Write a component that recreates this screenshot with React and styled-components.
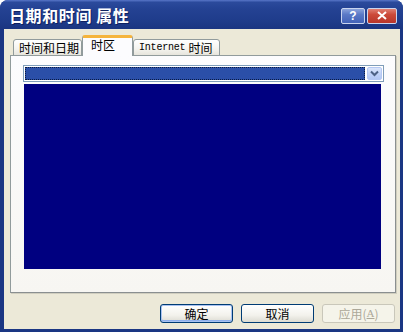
import React from "react";
import styled, { createGlobalStyle } from "styled-components";

const GlobalStyle = createGlobalStyle`
  html, body { margin: 0; padding: 0; background: #ffffff; }
  body { font-family: "Noto Sans CJK SC", "Liberation Sans", sans-serif; }
`;

const Window = styled.div`
  width: 403px;
  height: 332px;
  display: flex;
  flex-direction: column;
  background: #1a3683;
  border-radius: 8px 8px 0 0;
  overflow: hidden;
`;

const TitleBar = styled.div`
  height: 29px;
  flex: none;
  display: flex;
  align-items: center;
  padding: 0 6px 0 9px;
  background: linear-gradient(180deg, #5876c8 0%, #2b4a9c 8%, #244293 30%, #1f3c8b 70%, #1a3581 100%);
`;

const Title = styled.div`
  flex: 1;
  color: #ffffff;
  font-size: 16px;
  font-weight: 700;
  letter-spacing: 0.6px;
  text-shadow: 1px 1px 0 #0f2160;
  line-height: 1;
  margin-top: 1px;
`;

const CaptionButton = styled.div`
  width: ${(p) => p.$w}px;
  height: 16px;
  margin-left: 2px;
  margin-top: 2px;
  border-radius: 2px;
  border: 1px solid #c9d4ee;
  box-sizing: border-box;
  display: flex;
  align-items: center;
  justify-content: center;
  color: #ffffff;
  font-family: "Liberation Sans", sans-serif;
  font-weight: 700;
  font-size: 12px;
  background: ${(p) =>
    p.$close
      ? "linear-gradient(180deg, #e07f72 0%, #cc4a3a 40%, #b8352a 100%)"
      : "linear-gradient(180deg, #8aa3dc 0%, #5a79c6 40%, #4262b8 100%)"};
`;

const Body = styled.div`
  flex: 1;
  margin: 0 3px 3px 4px;
  background: #ece9d8;
  display: flex;
  flex-direction: column;
  padding: 6px 4px 0 6px;
  font-size: 12px;
`;

const TabRow = styled.div`
  display: flex;
  align-items: flex-end;
  height: 21px;
  padding-left: 3px;
  margin-bottom: -1px;
  position: relative;
  z-index: 1;
`;

const Tab = styled.div`
  width: ${(p) => p.$w}px;
  height: ${(p) => (p.$active ? 21 : 17)}px;
  box-sizing: border-box;
  border: 1px solid #919b9c;
  border-bottom: ${(p) => (p.$active ? "none" : "1px solid #919b9c")};
  border-top: ${(p) => (p.$active ? "3px solid #f5b43c" : "1px solid #919b9c")};
  border-radius: 3px 3px 0 0;
  background: ${(p) =>
    p.$active ? "#fcfcfe" : "linear-gradient(180deg, #ffffff 0%, #f4f3ee 60%, #e6e4dc 100%)"};
  color: #000;
  display: flex;
  align-items: ${(p) => (p.$active ? "flex-start" : "center")};
  padding-left: ${(p) => (p.$active ? 8 : 5)}px;
  padding-top: ${(p) => (p.$active ? 1 : 0)}px;
  font-size: 12px;
  line-height: 1;
  white-space: nowrap;
`;

const Latin = styled.span`
  font-family: "Liberation Mono", monospace;
  font-size: 10px;
  margin-right: 3px;
  letter-spacing: -0.2px;
`;

const Panel = styled.div`
  height: 238px;
  box-sizing: border-box;
  border: 1px solid #919b9c;
  border-right-color: #8a8f90;
  border-bottom-color: #8a8f90;
  box-shadow: 1px 1px 0 #d0cebf;
  background: linear-gradient(180deg, #fcfcfe 0%, #f7f6f2 100%);
  padding: 9px 12px 0 12px;
  display: flex;
  flex-direction: column;
`;

const Combo = styled.div`
  width: 361px;
  height: 17px;
  box-sizing: border-box;
  border: 1px solid #7f9db9;
  background: #ffffff;
  display: flex;
  padding: 1px;
`;

const ComboField = styled.div`
  flex: 1;
  background: #2b4fa8;
  outline: 1px dotted #0a1a40;
  outline-offset: -1px;
`;

const ComboButton = styled.div`
  width: 15px;
  margin-left: 2px;
  box-sizing: border-box;
  border: 1px solid #b5c8f3;
  border-radius: 2px;
  background: linear-gradient(180deg, #dce6fb 0%, #c3d4f8 50%, #b3c7f4 100%);
  display: flex;
  align-items: center;
  justify-content: center;
`;

const List = styled.div`
  width: 357px;
  height: 185px;
  margin: 2px 0 0 1px;
  background: #000080;
`;

const ButtonRow = styled.div`
  display: flex;
  justify-content: flex-end;
  gap: 8px;
  margin-top: 11px;
  padding-right: 1px;
`;

const Button = styled.div`
  width: 73px;
  height: 19px;
  box-sizing: border-box;
  border: 1px solid ${(p) => (p.$disabled ? "#c9c7ba" : "#003c74")};
  border-radius: 3px;
  background: ${(p) =>
    p.$disabled
      ? "#f5f4ea"
      : "linear-gradient(180deg, #ffffff 0%, #f3f2ec 60%, #dcdbd2 100%)"};
  box-shadow: ${(p) => (p.$default ? "inset 0 0 0 1px #a9c2f1, inset 0 -1px 0 1px #90b0ec" : "none")};
  color: ${(p) => (p.$disabled ? "#aca899" : "#000")};
  font-size: 12px;
  line-height: 1;
  display: flex;
  align-items: center;
  justify-content: center;
`;

const Accel = styled.span`
  font-family: "Liberation Serif", serif;
  font-size: 11px;
  text-decoration: underline;
`;

export default function App() {
  return (
    <>
      <GlobalStyle />
      <Window>
        <TitleBar>
          <Title>日期和时间 属性</Title>
          <CaptionButton $w={24}>?</CaptionButton>
          <CaptionButton $w={30} $close>
            <svg width="10" height="9" viewBox="0 0 10 9">
              <path d="M1 1 L9 8 M9 1 L1 8" stroke="#fff" strokeWidth="2" />
            </svg>
          </CaptionButton>
        </TitleBar>
        <Body>
          <TabRow>
            <Tab $w={69}>时间和日期</Tab>
            <Tab $w={51} $active>时区</Tab>
            <Tab $w={87}>
              <Latin>Internet</Latin>时间
            </Tab>
          </TabRow>
          <Panel>
            <Combo>
              <ComboField />
              <ComboButton>
                <svg width="9" height="7" viewBox="0 0 9 7">
                  <path d="M1 1.5 L4.5 5 L8 1.5" fill="none" stroke="#4d6185" strokeWidth="2" />
                </svg>
              </ComboButton>
            </Combo>
            <List />
          </Panel>
          <ButtonRow>
            <Button $default>确定</Button>
            <Button>取消</Button>
            <Button $disabled>
              应用(<Accel>A</Accel>)
            </Button>
          </ButtonRow>
        </Body>
      </Window>
    </>
  );
}
